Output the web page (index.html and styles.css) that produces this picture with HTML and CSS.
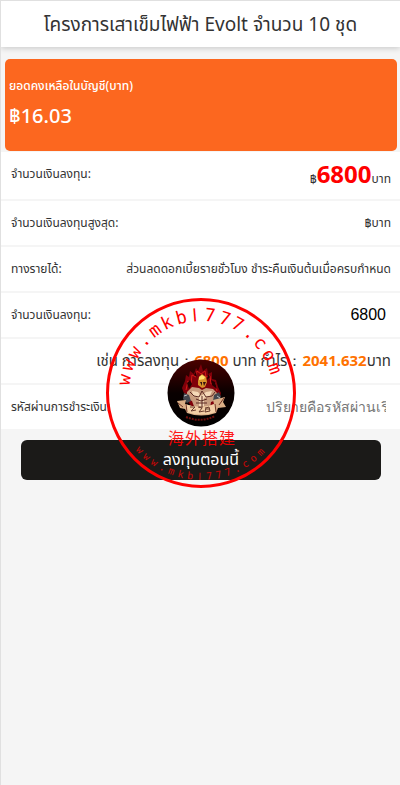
FILE: index.html
```html
<!DOCTYPE html>
<html lang="th">
<head>
<meta charset="utf-8">
<meta name="viewport" content="width=device-width, initial-scale=1">
<title>โครงการเสาเข็มไฟฟ้า Evolt จำนวน 10 ชุด</title>
<link rel="stylesheet" href="styles.css">
</head>
<body>
<header class="header"><h1>โครงการเสาเข็มไฟฟ้า Evolt จำนวน 10 ชุด</h1></header>
<main class="main">
  <section class="balance">
    <p class="balance-label">ยอดคงเหลือในบัญชี(บาท)</p>
    <p class="balance-value">฿16.03</p>
  </section>
  <form class="invest">
    <div class="rows">
      <div class="row"><span>จำนวนเงินลงทุน:</span><span>฿<b class="price">6800</b>บาท</span></div>
      <div class="row"><span>จำนวนเงินลงทุนสูงสุด:</span><span>฿บาท</span></div>
      <div class="row"><span>ทางรายได้:</span><span>ส่วนลดดอกเบี้ยรายชั่วโมง ชำระคืนเงินต้นเมื่อครบกำหนด</span></div>
      <div class="row"><label class="row-label" for="amount">จำนวนเงินลงทุน:</label><input class="field" id="amount" type="text" value="6800"></div>
      <div class="row estimate"><span>เช่น การลงทุน：<b>6800</b> บาท กำไร：<b>2041.632</b>บาท</span></div>
      <div class="row"><label class="row-label" for="password">รหัสผ่านการชำระเงิน:</label><input class="field" id="password" type="password" placeholder="ปริยายคือรหัสผ่านเริ่มต้น"></div>
    </div>
    <button class="submit" type="button">ลงทุนตอนนี้</button>
  </form>
  <svg class="stamp" viewBox="0 0 190 190" aria-hidden="true">
    <defs>
      <path id="arc-top" d="M23 95A72 72 0 0 1 167 95"/>
      <path id="arc-bottom" d="M8 95A87 87 0 0 0 182 95"/>
      <linearGradient id="night" x1="0" y1="0" x2="0" y2="1">
        <stop offset="0" stop-color="#4a0000"/><stop offset=".5" stop-color="#090000"/><stop offset="1" stop-color="#000"/>
      </linearGradient>
    </defs>
    <circle cx="95" cy="95" r="93.500" fill="none" stroke="#f00" stroke-width="3"/>
    <text class="stamp-top" x="7 21 34 48 62 75 89 105 116 130 143 157 170 184 197"><textPath href="#arc-top">www.mkb<tspan class="bar">l</tspan>777.com</textPath></text>
    <text class="stamp-bottom" x="62 72 82 92 102 112 122 134 142 152 162 172 182 192 202"><textPath href="#arc-bottom">www.mkb<tspan class="bar">l</tspan>777.com</textPath></text>
    <text class="stamp-name" x="62 79 96 113" y="146">海外搭建</text>
    <circle cx="95" cy="95" r="33.500" fill="url(#night)"/>
    <g>
      <path d="M79 98l-3-8 3-7 1-6 3 2 1-6 4 3 2-6 2 3 3-7 2 7 4-3 1 6 4-2 0 7 4 1 2 7 3 6-2 8-6 4-22 1z" fill="#80000a"/>
      <path d="M80 92l2-9 3 3 1-9 4 2 1-6 4 3 4-3 1 6 4-1 1 8 4-1 2 8" fill="none" stroke="#d41b18"/>
      <path d="M81 85l3-3 2 4-3 5zM105 82l4 2 2 7-5-4zM88 77l2-3 1 5zM102 76l2 3-3 3z" fill="#250000"/>
      <path d="M92 83l1-4 3-3 4 3 1 5-2 5-3 1-4-3z" fill="#d9942b"/>
      <path d="M93 79l3-2 3 2-1 2-5 1z" fill="#ffe06d"/>
      <path d="M94 84h2v4zM97 84h3l-2 4z" fill="#311"/>
      <path d="M81 94l5-5 7 1 3 2 4-2 7 1 5 5-2 6-5 2-1 6-15 1-3-8-5-2z" fill="#c89c7e"/>
      <path d="M86 93l6 1 3 4 5-4 6-1-2 5-6 2v8l-3 2-2-2v-8l-6-2z" fill="#f5d9b8"/>
      <path d="M84 94l4 4 5 1 3-6 4 6 6-1 3-4M96 98v11M90 101l5 2 6-2M90 105h11" fill="none" stroke="#5a2922"/>
      <path d="M78 95l5 2 2 6-4 2-4-4zM113 94l-5 3-1 6 5 1 3-5z" fill="#44464d"/>
      <path d="M78 98l3-1M111 98l3 2" stroke="#b9bdc4"/>
      <path d="M71 103l9-1-1 4q15 6 29 0l-1-4 12-3-2 5 3 5-8 1-2 5q-15 5-29 0l-2-4-5-1z" fill="#d9ae86"/>
      <path d="M79 106q16 6 30 0l1 8q-15 5-29 0z" fill="#f2cea5"/>
      <path d="M80 106l1 8M109 106l1 8M72 105l5 4M118 100l-5 7" stroke="#6e3425"/>
      <path d="M84 109h5l-4 4 5-1M92 109l4 1-3 4 5-1M97 109h-4M100 109l-1 5 5-1-1-4-3 1M100 111h4" fill="none" stroke="#693c2d"/>
      <path d="M80 119q15 6 29-1" fill="none" stroke="#71100d" stroke-width="2" stroke-dasharray="2 1"/>
    </g>
  </svg>
</main>
</body>
</html>
```
FILE: styles.css
```css
* { box-sizing: border-box; }
body {
  margin: 0;
  min-height: 100vh;
  border-left: 1px solid #e0e0e0;
  background: #f5f5f5;
  color: #333;
  font-family: "Noto Sans", "Noto Sans Thai", Tahoma, sans-serif;
  font-size: 12px;
}
.header {
  position: relative;
  display: flex;
  align-items: center;
  justify-content: center;
  height: 47px;
  border-top: 1px solid #e0e0e0;
  background: #fff;
  box-shadow: 0 1px 6px rgba(0, 0, 0, .2);
}
h1 { margin: 0; font-size: 19px; font-weight: 400; line-height: 24px; white-space: nowrap; }
.main { position: relative; padding-top: 12px; }
.balance {
  height: 92px;
  margin: 0 3px 1px 4px;
  padding: 17px 4px;
  border-radius: 5px;
  background: #fc671f;
  color: #fff;
}
.balance p { margin: 0; }
.balance-label { line-height: 20px; font-weight: 500; }
.balance-value { margin-top: 6px; font-size: 20px; font-weight: 500; line-height: 40px; }
.rows { background: #fff; }
.row {
  display: flex;
  align-items: center;
  justify-content: space-between;
  height: 46px;
  padding: 0 9px 0 10px;
  border-bottom: 2px solid #f5f5f5;
  white-space: nowrap;
}
.row:first-child { height: 49px; padding-bottom: 4px; }
.row:last-child { height: 44px; border-bottom: 0; }
.price { color: #f00; font-size: 24px; line-height: 32px; }
.row-label { width: 100px; overflow: hidden; line-height: 20px; }
.field {
  width: 120px;
  height: 32px;
  margin-right: 5px;
  padding: 0;
  border: 0;
  outline: 0;
  background: transparent;
  color: #000;
  font-family: "Liberation Sans", sans-serif;
  font-size: 16px;
  text-align: right;
}
.field::placeholder { color: #757575; font-size: 14px; }
.row.estimate { justify-content: flex-end; font-size: 15px; }
.estimate b { color: #ff7200; }
.submit {
  display: block;
  width: calc(100% - 39px);
  height: 40px;
  margin: 11px 19px 0 20px;
  padding: 0;
  border: 0;
  border-radius: 6px;
  background: #1b1a18;
  color: #fff;
  font-family: inherit;
  font-size: 16px;
}
.stamp {
  position: absolute;
  top: 251px;
  left: 50%;
  width: 190px;
  transform: translateX(-50%);
  pointer-events: none;
}
.stamp text { fill: #f00; }
.stamp-top { font: 18px "DejaVu Sans Mono", monospace; }
.stamp-bottom { font: 10px "DejaVu Sans Mono", monospace; opacity: .75; }
.bar { font-family: "Liberation Sans", sans-serif; }
.stamp-name { font: 16px "Noto Sans CJK SC", sans-serif; opacity: .9; }
```
